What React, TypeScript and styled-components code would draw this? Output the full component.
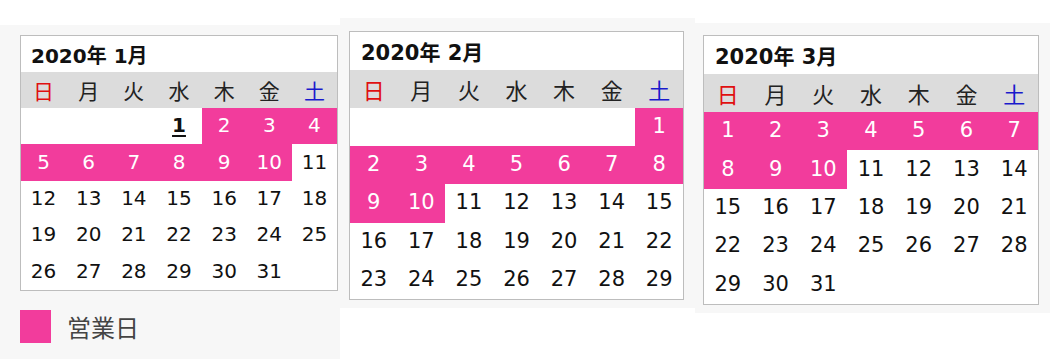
import styled, { createGlobalStyle } from 'styled-components';

const GlobalStyle = createGlobalStyle`
	html, body {
		margin: 0;
		padding: 0;
		background: #ffffff;
	}
	body {
		font-family: 'DejaVu Sans', 'Noto Sans CJK JP', sans-serif;
		color: #111;
	}
`;

interface MonthData {
	title: string;
	firstDay: number;
	days: number;
	openUntil: number;
	openFrom: number;
	today?: number;
}

interface SizeProps {
	$title: number;
	$head: number;
	$row: number;
	$font: number;
}

const WEEKDAYS = ['日', '月', '火', '水', '木', '金', '土'];

const Page = styled.div`
	display: flex;
	align-items: flex-start;
	width: 1050px;
	height: 359px;
	overflow: hidden;
`;

const Panel = styled.div<{ $top: number; $width: number; $height: number; $pad: string }>`
	display: flex;
	flex-direction: column;
	align-items: flex-start;
	box-sizing: border-box;
	margin-top: ${p => p.$top}px;
	width: ${p => p.$width}px;
	height: ${p => p.$height}px;
	padding: ${p => p.$pad};
	background: #f7f7f7;
	flex-shrink: 0;
`;

const Box = styled.div<{ $width: number }>`
	box-sizing: border-box;
	width: ${p => p.$width}px;
	border: 1px solid #bdbdbd;
	background: #ffffff;
`;

const Title = styled.div<SizeProps & { $indent: number }>`
	height: ${p => p.$title}px;
	display: flex;
	align-items: center;
	padding-left: ${p => p.$indent}px;
	font-size: ${p => p.$font}px;
	font-weight: bold;
	color: #111;
`;

const Grid = styled.div<SizeProps>`
	display: grid;
	grid-template-columns: repeat(7, 1fr);
	grid-auto-rows: ${p => p.$row}px;
`;

const HeadRow = styled.div<SizeProps>`
	display: grid;
	grid-template-columns: repeat(7, 1fr);
	height: ${p => p.$head}px;
	background: #dcdcdc;
`;

const HeadCell = styled.div<{ $color: string; $font: number }>`
	display: flex;
	align-items: center;
	justify-content: center;
	font-family: 'Noto Sans CJK JP', sans-serif;
	font-size: ${p => p.$font + 1}px;
	color: ${p => p.$color};
`;

const DayCell = styled.div<{ $open: boolean; $today: boolean; $font: number }>`
	display: flex;
	align-items: center;
	justify-content: center;
	font-size: ${p => p.$font}px;
	background: ${p => (p.$open ? '#f23c9c' : '#ffffff')};
	color: ${p => (p.$open ? '#ffffff' : '#111111')};
	font-weight: ${p => (p.$today ? 'bold' : 'normal')};
	text-decoration: ${p => (p.$today ? 'underline' : 'none')};
	text-underline-offset: 3px;
	text-decoration-thickness: 2px;
	padding-bottom: 2px;
	box-sizing: border-box;
`;

const Legend = styled.div`
	display: flex;
	align-items: center;
	gap: 16px;
	margin-top: 18px;
`;

const Swatch = styled.span`
	display: block;
	width: 31px;
	height: 33px;
	background: #f23c9c;
`;

const LegendText = styled.span`
	font-family: 'Noto Sans CJK JP', sans-serif;
	font-size: 24px;
	color: #444;
`;

interface CalendarProps {
	month: MonthData;
	width: number;
	indent: number;
	title: number;
	head: number;
	row: number;
	font: number;
}

const Calendar = ({ month, width, indent, title, head, row, font }: CalendarProps) => {
	const sizes = { $title: title, $head: head, $row: row, $font: font };
	const cells: (number | null)[] = [];
	for (let i = 0; i < month.firstDay; i++) cells.push(null);
	for (let d = 1; d <= month.days; d++) cells.push(d);
	while (cells.length % 7) cells.push(null);

	return (
		<Box $width={width}>
			<Title {...sizes} $indent={indent}>
				{month.title}
			</Title>
			<HeadRow {...sizes}>
				{WEEKDAYS.map((w, i) => (
					<HeadCell
						key={w}
						$font={font}
						$color={i === 0 ? '#e01010' : i === 6 ? '#1a1acc' : '#222'}
					>
						{w}
					</HeadCell>
				))}
			</HeadRow>
			<Grid {...sizes}>
				{cells.map((d, i) => (
					<DayCell
						key={i}
						$font={font}
						$open={!!d && d >= month.openFrom && d <= month.openUntil}
						$today={d === month.today}
					>
						{d ?? ''}
					</DayCell>
				))}
			</Grid>
		</Box>
	);
};

const months: MonthData[] = [
	{ title: '2020年 1月', firstDay: 3, days: 31, openFrom: 2, openUntil: 10, today: 1 },
	{ title: '2020年 2月', firstDay: 6, days: 29, openFrom: 1, openUntil: 10 },
	{ title: '2020年 3月', firstDay: 0, days: 31, openFrom: 1, openUntil: 10 },
];

export default function App() {
	return (
		<>
			<GlobalStyle />
			<Page>
				<Panel $top={25} $width={340} $height={334} $pad="10px 0 0 20px">
					<Calendar month={months[0]} width={318} indent={10} title={36} head={36} row={36.4} font={20} />
					<Legend>
						<Swatch />
						<LegendText>営業日</LegendText>
					</Legend>
				</Panel>
				<Panel $top={18} $width={355} $height={290} $pad="13px 0 0 9px">
					<Calendar month={months[1]} width={335} indent={11} title={38} head={38} row={38.2} font={21} />
				</Panel>
				<Panel $top={23} $width={355} $height={290} $pad="12px 0 0 8px">
					<Calendar month={months[2]} width={336} indent={11} title={38} head={38} row={38.4} font={21} />
				</Panel>
			</Page>
		</>
	);
}
